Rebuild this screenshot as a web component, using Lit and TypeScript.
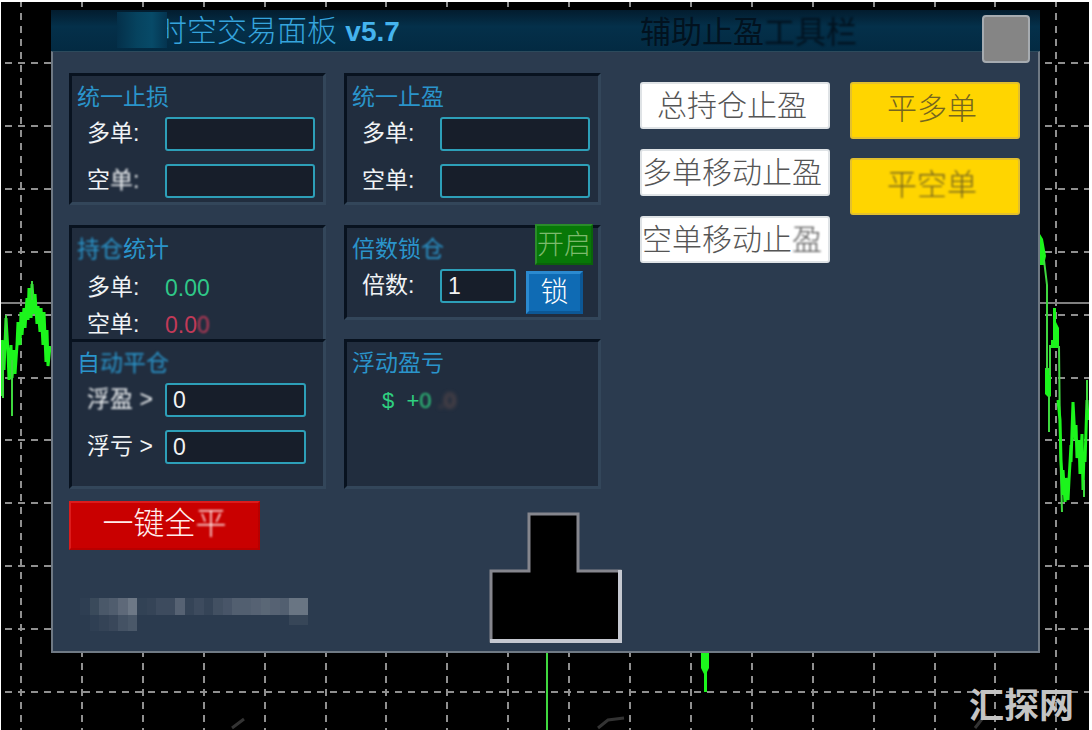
import { LitElement, html, svg, css } from "lit";
import { customElement, property } from "lit/decorators.js";

const COLUMNS = Array.from({ length: 18 }, (_, i) => Math.round(21 + i * 60.9));
const ROWS = Array.from({ length: 11 }, (_, i) => Math.round(63 + i * 62.9));

@customElement("price-chart")
class PriceChart extends LitElement {
  static styles = css`
    :host { display: block; }
    svg { display: block; width: 100%; height: 100%; }
    .grid { stroke: #8f8f8f; stroke-width: 2; stroke-dasharray: 7 6; fill: none; }
    .level { stroke: #808080; stroke-width: 2; }
    .price { stroke: #1cf51c; stroke-width: 3; fill: none; stroke-linejoin: bevel; }
    .wick { stroke: #3fd83f; stroke-width: 2; fill: none; }
    .body { fill: #1cf51c; }
  `;
  render() {
    return html`<svg viewBox="0 0 1092 730" preserveAspectRatio="none" aria-hidden="true">
      ${COLUMNS.map((x) => svg`<line class="grid" x1=${x} y1="0" x2=${x} y2="730"></line>`)}
      ${ROWS.map((y) => svg`<line class="grid" x1="5" y1=${y} x2="1092" y2=${y}></line>`)}
      <line class="level" x1="0" y1="303" x2="1092" y2="303"></line>
      <path class="price" d="M2 396 V340 L4 370 L6 318 L8 352 L9 380 L11 345 L12 378 L14 350 L15 374 L17 345 L18 322 L20 345 L21 312 L22 335 L24 308 L25 328 L27 298 L28 320 L29 288 L31 318 L32 284 L34 314 L35 294 L37 324 L38 306 L40 332 L41 308 L43 345 L44 312 L46 362 L47 330 L48 366 L50 346"></path>
      <path class="wick" d="M12 360 V416 M32 281 V300 M6 315 V340 M3 350 V398"></path>
      <path class="body" d="M1040 234 L1043 239 L1046 256 L1044 265 L1040 265 Z M1053 308 H1056 V322 L1059 328 V348 H1051 V340 H1053 Z M1045 368 H1051 V396 L1049 398 L1045 394 Z"></path>
      <path class="wick" d="M1044 260 L1047 285 V370 M1049 396 V432 M1050 345 V375 M1059 346 L1060 440 L1062 512"></path>
      <path class="price" d="M1058 400 L1060 420 L1061 460 L1063 495 L1063 470 L1065 502 L1066 478 L1068 500 L1069 480 L1071 445 L1071 462 L1073 402 L1075 440 L1076 425 L1077 458 L1079 440 L1080 474 L1082 434 L1083 490 L1084 452 L1085 462 L1087 400 L1088 420"></path>
      <path class="wick" d="M1087 380 V410 M1084 480 V497 M547 652 V730"></path>
      <path class="body" d="M701 652 H709 V668 L707 672 V692 H704 V674 L701 668 Z"></path>
      <path d="M598 728 L608 720 L624 718 M232 728 L244 719 M975 728 L986 714" stroke="#333" stroke-width="3" fill="none"></path>
    </svg>`;
  }
}

@customElement("group-box")
class GroupBox extends LitElement {
  @property() heading = "";
  @property({ type: Number }) blurFrom = 99;
  @property({ type: Number }) blurTo = 99;
  static styles = css`
    :host {
      display: block;
      box-sizing: border-box;
      border: 3px solid;
      border-color: #08121f #33465a #33465a #08121f;
      background: #212d3e;
    }
    .bar { display: flex; justify-content: space-between; height: 41px; }
    h2 {
      margin: 0;
      padding-left: 5px;
      font-size: 23px;
      line-height: 42px;
      font-weight: 400;
      color: #2a94ca;
      white-space: nowrap;
    }
    .smudge { filter: blur(1px); }
  `;
  render() {
    const h = this.heading;
    return html`<div class="bar">
        <h2>${h.slice(0, this.blurFrom)}<span class="smudge">${h.slice(this.blurFrom, this.blurTo)}</span>${h.slice(this.blurTo)}</h2>
        <slot name="action"></slot>
      </div>
      <slot></slot>`;
  }
}

@customElement("app-root")
class AppRoot extends LitElement {
  static styles = css`
    :host {
      display: block;
      background: #fff;
      font-family: "Liberation Sans", "Noto Sans CJK SC", sans-serif;
      font-weight: 300;
    }
    * { box-sizing: border-box; }
    .stage {
      position: relative;
      min-height: 100vh;
      padding: 10px 52px 77px 51px;
      background: #000;
    }
    .chart { position: absolute; inset: 0; }
    .edge {
      position: absolute;
      inset: 0;
      border: solid #fff;
      border-width: 2px 3px 0 1px;
    }
    .panel { position: relative; }
    .title-bar, .content { display: grid; grid-template-columns: minmax(0, 532fr) minmax(0, 380fr); column-gap: 39px; }
    .title-bar {
      height: 41px;
      padding: 0 20px 0 18px;
      background: linear-gradient(#031c2e, #04304a 40%, #032a42);
    }
    h1 {
      position: relative;
      margin: 0;
      padding-left: 88px;
      font-size: 30px;
      line-height: 42px;
      font-weight: 300;
      color: #35a4dd;
      white-space: nowrap;
    }
    .version { font-size: 28px; font-weight: 700; color: #45b4ee; }
    .veil {
      position: absolute;
      left: 48px;
      top: 2px;
      width: 50px;
      height: 36px;
      background: linear-gradient(90deg, #04304a, #06435f 40%, #074a68 70%, #043450);
    }
    .tools {
      margin: 0;
      font-size: 31px;
      line-height: 46px;
      font-weight: 400;
      color: #02121f;
      white-space: nowrap;
    }
    .close {
      position: absolute;
      top: 5px;
      right: 10px;
      width: 48px;
      height: 48px;
      border: 2px solid #a6abb0;
      border-radius: 4px;
      background: #858585;
    }
    .body {
      border: 2px solid #6f7984;
      border-top: 1px solid #2c4a5c;
      background: #2b3b4f;
      padding-bottom: 8px;
    }
    .content { padding: 21px 18px 0 16px; }
    .groups { display: grid; grid-template-columns: repeat(2, minmax(0, 1fr)); gap: 18px; }
    .stack { display: flex; flex-direction: column; }
    .tall { min-height: 132px; margin-bottom: 20px; }
    .stats { border-bottom: 0; height: 114px; }
    .lock { min-height: 95px; margin-bottom: 19px; }
    .low { min-height: 150px; }
    .fields { display: grid; grid-template-columns: minmax(0, 1fr); gap: 13px; padding: 0 8px 0 15px; }
    .fields.short { padding-right: 17px; }
    .field { display: flex; align-items: center; height: 34px; font-size: 23px; line-height: 30px; color: #f0f3f5; }
    .field label, .name { flex: 0 0 78px; padding-bottom: 2px; font-weight: 400; white-space: nowrap; }
    .figures { padding-left: 15px; }
    .figures .field { height: 37px; }
    .gain { color: #2fc888; }
    .loss { color: #c23a58; }
    input {
      flex: 1 1 0;
      min-width: 0;
      height: 34px;
      padding: 0 6px;
      border: 2px solid #2d9fb8;
      border-radius: 3px;
      background: #171e2a;
      color: #f2f2f2;
      font: inherit;
      outline: none;
    }
    .multiple { flex: 0 1 76px; }
    button { margin: 0; padding: 0; font: inherit; white-space: nowrap; cursor: pointer; }
    .on {
      width: 58px;
      height: 41px;
      margin: -4px 5px 0 0;
      border: 2px solid;
      border-color: #2a8c2a #0a630a #0a630a #2a8c2a;
      background: #077807;
      color: #7cba6c;
      font-size: 27px;
      line-height: 36px;
    }
    .lock-button {
      align-self: flex-start;
      flex: 0 0 57px;
      height: 43px;
      margin: 2px 0 0 10px;
      border: 3px solid;
      border-color: #2b8ad0 #0c5795 #0c5795 #2b8ad0;
      background: #0f6bb4;
      color: #fff;
      font-size: 28px;
      line-height: 36px;
    }
    .profit { margin: 0; padding-left: 35px; font-size: 22px; line-height: 36px; white-space: pre; color: #2fd080; }
    .dim { color: #735650; filter: blur(2px); }
    .actions { display: grid; grid-template-columns: 190fr 170fr; gap: 20px; align-items: start; padding-top: 9px; }
    .list { display: grid; gap: 20px; }
    .list.gold { gap: 19px; }
    .white, .yellow { width: 100%; font-size: 30px; line-height: 40px; border-radius: 3px; }
    .white { height: 47px; padding: 0 6px 0 0; border: 2px solid #dfe3e6; background: #fff; color: #555; }
    .yellow { height: 57px; padding: 0 6px 4px 0; border: 2px solid #e3c02e; background: #ffd500; color: #75651f; }
    .footer { display: grid; grid-template-columns: 420fr 531fr; padding: 12px 18px 0 16px; }
    .all {
      display: block;
      width: 191px;
      height: 49px;
      padding: 0 0 4px;
      border: 2px solid;
      border-color: #dc1c1c #b80000 #b80000 #dc1c1c;
      background: #c90000;
      color: #ffeceb;
      font-size: 31px;
      line-height: 40px;
    }
    .smudge { filter: blur(1px); }
    .mosaic { display: block; width: 228px; height: 34px; margin: 48px 0 0 11px; }
    .mask { display: block; width: 133px; height: 131px; margin-top: 11px; }
    .brand {
      position: absolute;
      right: 18px;
      bottom: 7px;
      margin: 0;
      font: 700 35px/40px "Noto Sans CJK SC", sans-serif;
      color: #c4c4c4;
    }
  `;

  private pair(id: string, smudged = false) {
    return html`<div class="fields">
      <div class="field"><label for="${id}-long">多单:</label><input id="${id}-long" type="text" /></div>
      <div class="field">
        <label for="${id}-short">空${smudged ? html`<span class="smudge">单:</span>` : "单:"}</label>
        <input id="${id}-short" type="text" />
      </div>
    </div>`;
  }

  private mosaic() {
    const top = [2, 8, 16, 19, 26, 34, 4, 5, 9, 9, 22, 5, 9, 5, 12, 15, 20, 20, 22, 24, 22, 20, 32, 32];
    return html`<svg class="mosaic" viewBox="0 0 228 34" shape-rendering="crispEdges" aria-hidden="true">
      ${top.map((v, i) => svg`<rect x=${i * 9.5} y="0" width="9.5" height="17" fill="#c8ccd2" fill-opacity=${v / 80}></rect>`)}
      ${[3, 6, 9, 16, 20].map((v, i) => svg`<rect x=${i * 9.5 + 9.5} y="17" width="9.5" height="16" fill="#c8ccd2" fill-opacity=${v / 100}></rect>`)}
      <rect x="209" y="17" width="19" height="10" fill="#c8ccd2" fill-opacity="0.08"></rect>
    </svg>`;
  }

  render() {
    return html`<main class="stage">
      <price-chart class="chart"></price-chart>
      <div class="edge"></div>
      <section class="panel">
        <header class="title-bar">
          <h1>时<span class="veil"></span>空交易面板 <b class="version">v5.7</b></h1>
          <h2 class="tools">辅助止盈<span class="smudge">工具栏</span></h2>
          <button class="close" aria-label="关闭"></button>
        </header>
        <div class="body">
          <div class="content">
            <div class="groups">
              <div class="stack">
                <group-box class="tall" heading="统一止损">${this.pair("stop", true)}</group-box>
                <group-box class="stats" heading="持仓统计" .blurFrom=${0} .blurTo=${2}>
                  <div class="figures">
                    <div class="field"><span class="name">多单:</span><span class="gain">0.00</span></div>
                    <div class="field"><span class="name">空单:</span><span class="loss">0.0<span class="smudge">0</span></span></div>
                  </div>
                </group-box>
                <group-box class="low" heading="自动平仓" .blurFrom=${1} .blurTo=${4}>
                  <div class="fields short">
                    <div class="field"><label for="profit"><span class="smudge">浮盈 &gt;</span></label><input id="profit" type="text" value="0" /></div>
                    <div class="field"><label for="deficit">浮亏 &gt;</label><input id="deficit" type="text" value="0" /></div>
                  </div>
                </group-box>
              </div>
              <div class="stack">
                <group-box class="tall" heading="统一止盈">${this.pair("take")}</group-box>
                <group-box class="lock" heading="倍数锁仓" .blurFrom=${3} .blurTo=${4}>
                  <button class="on" slot="action">开启</button>
                  <div class="fields">
                    <div class="field">
                      <label for="multiple">倍数:</label><input class="multiple" id="multiple" type="text" value="1" />
                      <button class="lock-button">锁</button>
                    </div>
                  </div>
                </group-box>
                <group-box class="low" heading="浮动盈亏">
                  <p class="profit">$  +<span class="smudge">0</span><span class="dim"> .0</span></p>
                </group-box>
              </div>
            </div>
            <div class="actions">
              <div class="list">
                <button class="white">总持仓止盈</button>
                <button class="white">多单移动止盈</button>
                <button class="white">空单移动止<span class="smudge">盈</span></button>
              </div>
              <div class="list gold">
                <button class="yellow">平多单</button>
                <button class="yellow"><span class="smudge">平空单</span></button>
              </div>
            </div>
          </div>
          <div class="footer">
            <div>
              <button class="all">一键全<span class="smudge">平</span></button>
              ${this.mosaic()}
            </div>
            <svg class="mask" viewBox="0 0 133 131" aria-hidden="true">
              <path d="M2 59 H40 V2 H89 V59 H131 V129 H2 Z" fill="#000" stroke="#85868d" stroke-width="3"></path>
              <path d="M131 58 V129 H1" fill="none" stroke="#c5c8d0" stroke-width="4"></path>
            </svg>
          </div>
        </div>
      </section>
      <p class="brand">汇探网</p>
    </main>`;
  }
}
